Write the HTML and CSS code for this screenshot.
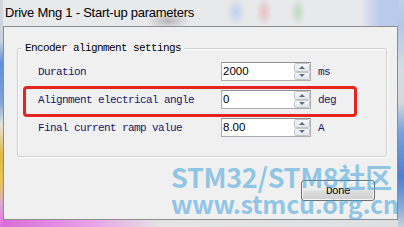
FILE: index.html
```html
<!DOCTYPE html>
<html>
<head>
<meta charset="utf-8">
<link rel="stylesheet" href="styles.css">
</head>
<body>
<div class="frame">
  <div class="titlebar"><span class="title">Drive Mng 1 - Start-up parameters</span></div>
  <div class="client">
    <fieldset class="group">
      <legend>Encoder alignment settings</legend>
      <div class="row">
        <span class="label">Duration</span>
        <div class="spin"><span class="value">2000</span><span class="arrows"><span class="arrow up"></span><span class="arrow down"></span></span></div>
        <span class="unit">ms</span>
      </div>
      <div class="row">
        <span class="label">Alignment electrical angle</span>
        <div class="spin"><span class="value">0</span><span class="arrows"><span class="arrow up"></span><span class="arrow down"></span></span></div>
        <span class="unit">deg</span>
      </div>
      <div class="row">
        <span class="label">Final current ramp value</span>
        <div class="spin"><span class="value">8.00</span><span class="arrows"><span class="arrow up"></span><span class="arrow down"></span></span></div>
        <span class="unit">A</span>
      </div>
    </fieldset>
    <div class="actions"><button class="btn">Done</button></div>
  </div>
  <div class="highlight"></div>
  <div class="watermark"><div class="wm1">STM32/STM8社区</div><div class="wm2">www.stmcu.org.cn</div></div>
</div>
</body>
</html>
```
FILE: styles.css
```css
html, body {
  margin: 0;
  padding: 0;
}
body {
  width: 404px;
  height: 227px;
  overflow: hidden;
  background: #e8e9eb;
}
.frame {
  position: relative;
  width: 404px;
  height: 227px;
  box-sizing: border-box;
  padding: 0 6px 7px 3px;
  display: flex;
  flex-direction: column;
  background:
    linear-gradient(to bottom, #d6d9dd 0%, #c8d2de 18%, #5f8fd6 28%, #7fa3d8 45%, #e4e4dc 55%, #e0b840 68%, #e8c458 80%, #dca8d4 90%, #e070e0 100%) left top / 3px 100% no-repeat,
    linear-gradient(to bottom, #bfd0ea 0%, #b4c8e6 12%, #d4dbe4 30%, #d6d8dc 45%, #7aa2dc 58%, #4c80d2 78%, #8eacd8 92%, #c8d0dc 100%) right top / 6px 100% no-repeat,
    linear-gradient(to right, #d86cd8 0%, #e8a0e8 22%, #e4e4e4 40%, #dedfe1 100%) left bottom / 100% 7px no-repeat,
    radial-gradient(ellipse 22px 8px at 168px 21px, rgba(120,120,120,0.45), rgba(120,120,120,0)),
    radial-gradient(ellipse 10px 14px at 236px 12px, rgba(150,180,230,0.45), rgba(150,180,230,0)),
    radial-gradient(ellipse 8px 14px at 264px 12px, rgba(230,140,150,0.45), rgba(230,140,150,0)),
    radial-gradient(ellipse 8px 14px at 298px 12px, rgba(140,200,140,0.45), rgba(140,200,140,0)),
    linear-gradient(to right, rgba(180,200,235,0) 0px, rgba(180,200,235,0.9) 20px) 360px 0 / 44px 26px no-repeat,
    #e8e9eb;
}
.titlebar {
  height: 26px;
  display: flex;
  align-items: center;
  padding-left: 2px;
  padding-bottom: 1px;
  box-sizing: border-box;
}
.title {
  font-family: "Liberation Sans", Arial, sans-serif;
  font-size: 13px;
  letter-spacing: -0.25px;
  color: #000;
}
.client {
  flex: 1;
  background: #f0f0f0;
  border: 1px solid #8c8d8e;
  display: flex;
  flex-direction: column;
}
.group {
  margin: 14px 10px 0 13px;
  padding: 7px 0 19px 20px;
  border: 1px solid #cfcfcf;
  border-radius: 2px;
  box-shadow: 1px 1px 0 #ffffff, inset 1px 1px 0 #ffffff;
  display: flex;
  flex-direction: column;
  gap: 9px;
}
legend {
  margin-left: -16px;
  padding: 0 3px;
  font-family: "Liberation Mono", monospace;
  font-size: 11px;
  letter-spacing: -0.6px;
  line-height: 14px;
  color: #000;
}
.row {
  display: grid;
  grid-template-columns: 176px 90px auto;
  column-gap: 7px;
  align-items: center;
  height: 19px;
}
.label, .unit {
  font-family: "Liberation Mono", monospace;
  font-size: 11px;
  letter-spacing: -0.6px;
  color: #16166a;
}
.spin {
  height: 19px;
  box-sizing: border-box;
  border: 1px solid #abadb3;
  border-top-color: #8e9096;
  background: #fff;
  display: flex;
  align-items: stretch;
}
.value {
  flex: 1;
  font-family: "Liberation Sans", Arial, sans-serif;
  font-size: 11.5px;
  line-height: 17px;
  padding-left: 1px;
  color: #000;
}
.arrows {
  width: 16px;
  display: flex;
  flex-direction: column;
}
.arrow {
  flex: 1;
  border: 1px solid #c3c6cb;
  border-radius: 2px;
  background: linear-gradient(#f7f8fa, #e3e6ea);
  display: flex;
  align-items: center;
  justify-content: center;
}
.arrow::after {
  content: "";
  width: 0;
  height: 0;
  border-left: 3px solid transparent;
  border-right: 3px solid transparent;
}
.up::after {
  border-bottom: 3px solid #5b6b80;
}
.down::after {
  border-top: 3px solid #5b6b80;
}
.actions {
  display: flex;
  justify-content: flex-end;
  margin: 23px 22px 0 0;
}
.btn {
  width: 74px;
  height: 21px;
  padding: 0;
  border: 1px solid #707070;
  border-radius: 3px;
  background: linear-gradient(#f3f3f3 0%, #ebebeb 48%, #dddddd 52%, #cfcfcf 100%);
  box-shadow: inset 0 0 0 1px rgba(255,255,255,0.8);
  font-family: "Liberation Mono", monospace;
  font-size: 11px;
  letter-spacing: -0.6px;
  color: #000;
}
.highlight {
  position: absolute;
  left: 23px;
  top: 86px;
  width: 334px;
  height: 31px;
  box-sizing: border-box;
  border: 3px solid #e5231f;
  border-radius: 4px;
}
.watermark {
  position: absolute;
  left: 171px;
  top: 162px;
  font-family: "Noto Sans CJK SC", "Noto Sans", sans-serif;
  font-weight: 700;
  color: rgba(60,160,220,0.55);
  pointer-events: none;
}
.wm1 {
  font-size: 27px;
  line-height: 30px;
  letter-spacing: -0.3px;
}
.wm2 {
  font-size: 25px;
  line-height: 22px;
  letter-spacing: -0.3px;
}
```
